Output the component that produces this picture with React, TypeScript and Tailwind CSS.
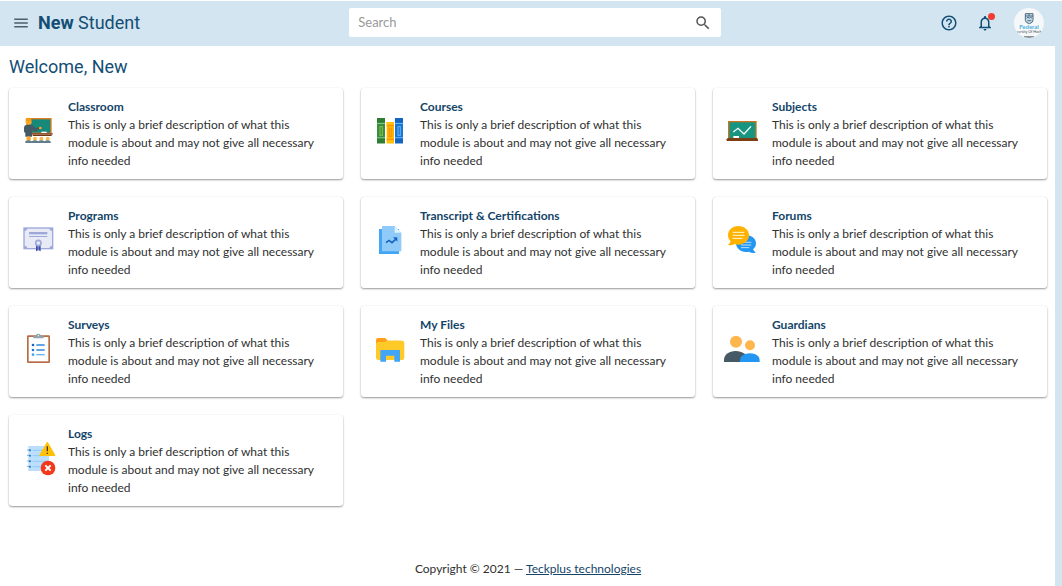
import type { ReactNode } from 'react'
import { MdHelpOutline, MdMenu, MdNotificationsNone, MdSearch } from 'react-icons/md'

type Module = { title: string; icon: ReactNode }

function Icon({ viewBox, children }: { viewBox: string; children: ReactNode }) {
  return (
    <svg viewBox={viewBox} className="size-8 overflow-visible" aria-hidden="true">
      {children}
    </svg>
  )
}

const classroom = (
  <Icon viewBox="36 42 96 96">
    <rect x="49" y="54" width="76" height="46" fill="#e67e22" />
    <rect x="56" y="58" width="65" height="40" fill="#16897b" />
    <rect x="94" y="95" width="16" height="5" fill="#fff" />
    <rect x="66" y="99" width="62" height="5" fill="#a0522d" />
    <rect x="68" y="104" width="57" height="4" fill="#6d3a1a" />
    <circle cx="56" cy="66" r="9" fill="#ffa726" />
    <path d="M47 56q8-5 17 0v8H47z" fill="#f39c12" />
    <path d="M42 84q0-10 10-10h10q5 0 9 5l6 6 12-4 2 6-15 8-10-4v19H46V99q-4-2-4-6z" fill="#455a64" />
    <circle cx="91" cy="84" r="4" fill="#ffa726" />
    <circle cx="56" cy="116" r="7" fill="#ffa726" />
    <circle cx="75" cy="116" r="6" fill="#ffb74d" />
    <circle cx="94" cy="116" r="6" fill="#ffb74d" />
    <circle cx="113" cy="116" r="6" fill="#ffb74d" />
    <path d="M46 129v-5q4-3 9-3t10 3q5-3 10-3t9 3q5-3 10-3t9 3q5-3 10-3t9 3v5z" fill="#607d8b" />
  </Icon>
)

const courses = (
  <Icon viewBox="27 42 96 96">
    <rect x="36" y="54" width="24" height="76" fill="#388e3c" />
    <path d="M36 54h24v13H36zM36 115h24v15H36z" fill="#2e7d32" />
    <path d="M36 69h24v3H36zM36 112h24v3H36z" fill="#81c784" />
    <rect x="45" y="80" width="7" height="26" fill="none" stroke="#8bc34a" strokeWidth="3" />
    <rect x="65" y="66" width="22" height="64" fill="#ffb300" />
    <path d="M65 66h22v8H65zM65 121h22v9H65z" fill="#ffc107" />
    <path d="M65 75h22v3H65zM65 117h22v3H65z" fill="#ff8f00" />
    <rect x="73" y="86" width="6" height="24" fill="none" stroke="#ff8f00" strokeWidth="3" />
    <rect x="90" y="54" width="24" height="76" fill="#1976d2" />
    <path d="M90 54h24v13H90zM90 115h24v15H90z" fill="#1565c0" />
    <path d="M90 69h24v3H90zM90 112h24v3H90z" fill="#64b5f6" />
    <rect x="99" y="80" width="7" height="26" fill="none" stroke="#64b5f6" strokeWidth="3" />
  </Icon>
)

const subjects = (
  <Icon viewBox="33 42 96 96">
    <rect x="39" y="63" width="86" height="53" fill="#c87421" />
    <rect x="43" y="67" width="78" height="49" fill="#169581" />
    <path d="M55 96l14-11 18 17 21-23" fill="none" stroke="#fff" strokeWidth="4" />
    <rect x="55" y="108" width="17" height="6" fill="#fff" />
    <path d="M38 114h88l3 4v5H35v-5z" fill="#7b3f14" />
  </Icon>
)

const programs = (
  <Icon viewBox="36 39 96 96">
    <rect x="42" y="54" width="86" height="62" fill="#e8eaf6" stroke="#9fa8da" strokeWidth="4" />
    <path d="M42 54h10q0 9-10 9zM128 54h-10q0 9 10 9zM42 116h10q0-9-10-9zM128 116h-10q0-9 10-9z" fill="#9fa8da" />
    <rect x="57" y="66" width="55" height="7" fill="#9fa8da" />
    <rect x="57" y="78" width="55" height="3" fill="#9fa8da" />
    <path d="M78 104h14v20l-7-4-7 4z" fill="#3f51a5" />
    <path d="M83 107h4v14h-4z" fill="#7986cb" />
    <circle cx="85" cy="99" r="8" fill="#e8eaf6" stroke="#9fa8da" strokeWidth="5" />
  </Icon>
)

const transcript = (
  <Icon viewBox="27 39 96 96">
    <path d="M42 57h60v75H42z" fill="#42a5f5" />
    <path d="M51 48h38l20 20v56H51z" fill="#90caf9" />
    <path d="M89 49v19h19z" fill="#e1f5fe" />
    <path d="M63 98l9-7 9 7 13-12" fill="none" stroke="#1565c0" strokeWidth="4.5" />
    <path d="M84 82h13v13z" fill="#1565c0" />
  </Icon>
)

const forums = (
  <Icon viewBox="33 39 96 96">
    <path d="M93 75c17 0 30 11 30 25 0 8-4 14-9 18q3 6 8 10-11 3-20-3-3 1-9 1c-17 0-30-12-30-26s13-25 30-25z" fill="#2196f3" />
    <path d="M78 97h31M78 105h31M78 113h25" stroke="#bbdefb" strokeWidth="3" />
    <path d="M70 48c18 0 32 12 32 28s-14 28-32 28q-6 0-11-2-9 6-20 3 6-4 8-11c-5-5-8-11-8-18 0-16 13-28 31-28z" fill="#ffb300" />
    <path d="M54 67h33M54 76h33M54 85h27" stroke="#fff8e1" strokeWidth="3" strokeLinecap="round" />
  </Icon>
)

const surveys = (
  <Icon viewBox="36 36 96 96">
    <rect x="51" y="46" width="69" height="83" rx="4" fill="#b86b45" />
    <rect x="56" y="51" width="59" height="73" fill="#fff" />
    <path d="M70 55v-5q0-3 4-3h3q1-6 8-6t8 6h4q4 0 4 3v5z" fill="#90a4ae" />
    <circle cx="85" cy="47" r="2" fill="#fff" />
    <path d="M79 75h25" stroke="#1976d2" strokeWidth="4" />
    <circle cx="69" cy="75" r="4" fill="#1565c0" />
    <path d="M79 90h25" stroke="#1976d2" strokeWidth="4" />
    <circle cx="69" cy="90" r="4" fill="#1976d2" />
    <path d="M79 104h25" stroke="#64b5f6" strokeWidth="4" />
    <circle cx="69" cy="104" r="4" fill="#42a5f5" />
  </Icon>
)

const files = (
  <Icon viewBox="27 36 96 96">
    <path d="M33 60q0-6 6-6h22l7 8h40v20H33z" fill="#ff9e1b" />
    <path d="M33 72q0-6 6-6h19l7-4h46q7 0 7 7v44q0 7-7 7H40q-7 0-7-7z" fill="#ffca28" />
    <path d="M46 90h59v35H88v-18H63v18H46z" fill="#42a5f5" />
  </Icon>
)

const guardians = (
  <Icon viewBox="33 366 96 96">
    <circle cx="63" cy="395" r="18" fill="#ffb74d" />
    <circle cx="105" cy="406" r="15" fill="#ffb74d" />
    <path d="M27 456v-6c0-16 15-27 35-27s36 11 36 27v6z" fill="#455a64" />
    <path d="M75 456v-4c0-13 12-22 30-22s29 9 29 22v4z" fill="#2196f3" />
  </Icon>
)

const logs = (
  <Icon viewBox="36 363 96 96">
    <rect x="55" y="378" width="62" height="75" fill="#bbdefb" />
    <path d="M68 391h43M68 407h43M68 424h43M68 440h43" stroke="#90caf9" strokeWidth="3" />
    <path d="M51 390h8M51 406h8M51 423h8M51 439h8" stroke="#5c7fa8" strokeWidth="2" />
    <g fill="#1976d2">
      <circle cx="60" cy="391" r="3" />
      <circle cx="60" cy="407" r="3" />
      <circle cx="60" cy="424" r="3" />
      <circle cx="60" cy="440" r="3" />
    </g>
    <path d="M112 368l22 38H90z" fill="#ffc107" stroke="#ffc107" strokeWidth="4" strokeLinejoin="round" />
    <path d="M112 379v15M112 398v4" stroke="#4e342e" strokeWidth="4" />
    <circle cx="114" cy="444" r="22" fill="#f4381b" />
    <path d="M106 436l16 16M122 436l-16 16" stroke="#fff" strokeWidth="6" />
  </Icon>
)

const modules: Module[] = [
  { title: 'Classroom', icon: classroom },
  { title: 'Courses', icon: courses },
  { title: 'Subjects', icon: subjects },
  { title: 'Programs', icon: programs },
  { title: 'Transcript & Certifications', icon: transcript },
  { title: 'Forums', icon: forums },
  { title: 'Surveys', icon: surveys },
  { title: 'My Files', icon: files },
  { title: 'Guardians', icon: guardians },
  { title: 'Logs', icon: logs },
]

function ModuleCard({ title, icon }: Module) {
  return (
    <a
      href="#"
      className="flex gap-[14px] rounded-[3px] bg-white pt-[10px] pr-3 pb-[9px] pl-[13px] shadow-[0_1px_2px_rgba(0,0,0,0.4),0_0_1px_rgba(0,0,0,0.08)]"
    >
      <span className="mt-4 shrink-0">{icon}</span>
      <span className="text-[12px] leading-[18px] text-[#303030]">
        <span className="block font-bold text-[#134569]">{title}</span>
        This is only a brief description of what this module is about and may not give all necessary info needed
      </span>
    </a>
  )
}

function Avatar() {
  return (
    <button type="button" aria-label="Account" className="size-[30px] overflow-hidden rounded-full">
      <svg viewBox="0 0 90 90" className="size-full">
        <rect width="90" height="90" fill="#f5f7f9" />
        <path d="M30 84h30v6H30z" fill="#8c9297" />
        <path d="M34 17h23v20q0 7-11 10-12-3-12-10z" fill="#c5dcea" stroke="#536b7c" strokeWidth="3" />
        <path d="M34 24h23M38 31l4-4 4 4 4-4 4 4M40 38h12M45 17v7" fill="none" stroke="#365a73" strokeWidth="2.5" />
        <text x="45" y="64" textAnchor="middle" fill="#4eb2dc" className="font-['Lato',sans-serif] text-[18px] font-bold">
          Federal
        </text>
        <text x="45" y="75" textAnchor="middle" fill="#46505a" className="font-['Lato',sans-serif] text-[11px]">
          versity Of Hack
        </text>
      </svg>
    </button>
  )
}

export default function App() {
  return (
    <div className="flex min-h-screen flex-col border-t border-white bg-[#d3e5f0] font-['Lato',sans-serif]">
      <header className="flex h-[45px] items-center pr-[18px] pb-[2px] pl-[12px]">
        <div className="flex flex-1 items-center gap-2 font-['Roboto',sans-serif] text-[18px] text-[#134e75]">
          <button type="button" aria-label="Menu" className="text-[#4f5d68]">
            <MdMenu size={18} />
          </button>
          <span>
            <b>New</b> Student
          </span>
        </div>
        <form role="search" className="ml-[14px] flex h-[29px] w-[36%] items-center rounded-[2px] bg-white px-[9px]">
          <input
            type="search"
            aria-label="Search"
            placeholder="Search"
            className="min-w-0 flex-1 bg-transparent text-[13px] text-[#303030] outline-none placeholder:text-[#999999]"
          />
          <button type="button" aria-label="Submit search" className="text-[#555555]">
            <MdSearch size={18} />
          </button>
        </form>
        <div className="flex flex-1 items-center justify-end text-[#134e75]">
          <button type="button" aria-label="Help" className="mr-[18px]">
            <MdHelpOutline size={18} />
          </button>
          <button type="button" aria-label="Notifications" className="relative mr-5">
            <MdNotificationsNone size={18} />
            <span className="absolute -top-px -right-px size-[7px] rounded-full bg-[#f23c32]" />
          </button>
          <Avatar />
        </div>
      </header>
      <div className="mr-[7px] flex flex-1 flex-col bg-white pr-2 pl-[9px]">
        <main>
          <h1 className="my-2 font-['Roboto',sans-serif] text-[18px] leading-[26px] text-[#134e75]">Welcome, New</h1>
          <div className="grid grid-cols-3 gap-[18px]">
            {modules.map((m) => (
              <ModuleCard key={m.title} {...m} />
            ))}
          </div>
        </main>
        <footer className="mt-auto pt-8 pb-2 text-center text-[12px] leading-[18px] text-[#303030]">
          Copyright © 2021 —{' '}
          <a href="#" className="text-[#134569] underline">
            Teckplus technologies
          </a>
        </footer>
      </div>
    </div>
  )
}
